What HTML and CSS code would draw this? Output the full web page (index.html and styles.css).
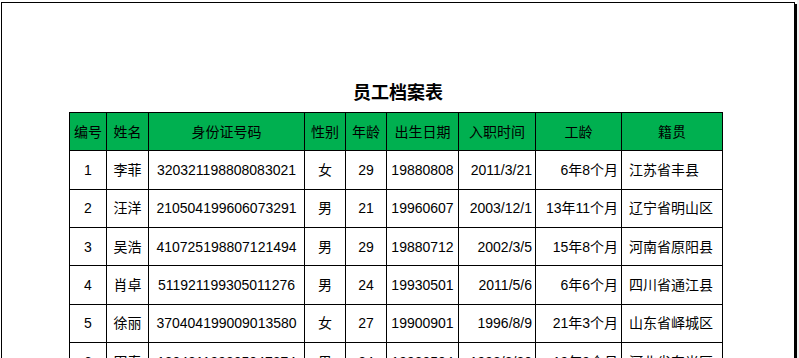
FILE: index.html
```html
<!DOCTYPE html>
<html lang="zh-CN">
<head>
<meta charset="utf-8">
<title>员工档案表</title>
<link rel="stylesheet" href="styles.css">
</head>
<body>
<div class="frame">
  <div class="sheet">
    <h1 class="title">员工档案表</h1>
    <table class="grid">
      <colgroup>
        <col class="c1"><col class="c2"><col class="c3"><col class="c4"><col class="c5">
        <col class="c6"><col class="c7"><col class="c8"><col class="c9">
      </colgroup>
      <thead>
        <tr>
          <th>编号</th><th>姓名</th><th>身份证号码</th><th>性别</th><th>年龄</th>
          <th>出生日期</th><th>入职时间</th><th>工龄</th><th>籍贯</th>
        </tr>
      </thead>
      <tbody>
        <tr><td>1</td><td>李菲</td><td>320321198808083021</td><td>女</td><td>29</td><td>19880808</td><td class="r">2011/3/21</td><td class="r">6年8个月</td><td class="l">江苏省丰县</td></tr>
        <tr><td>2</td><td>汪洋</td><td>210504199606073291</td><td>男</td><td>21</td><td>19960607</td><td class="r">2003/12/1</td><td class="r">13年11个月</td><td class="l">辽宁省明山区</td></tr>
        <tr><td>3</td><td>吴浩</td><td>410725198807121494</td><td>男</td><td>29</td><td>19880712</td><td class="r">2002/3/5</td><td class="r">15年8个月</td><td class="l">河南省原阳县</td></tr>
        <tr><td>4</td><td>肖卓</td><td>511921199305011276</td><td>男</td><td>24</td><td>19930501</td><td class="r">2011/5/6</td><td class="r">6年6个月</td><td class="l">四川省通江县</td></tr>
        <tr><td>5</td><td>徐丽</td><td>370404199009013580</td><td>女</td><td>27</td><td>19900901</td><td class="r">1996/8/9</td><td class="r">21年3个月</td><td class="l">山东省峄城区</td></tr>
        <tr><td>6</td><td>田春</td><td>130421199305047274</td><td>男</td><td>24</td><td>19930504</td><td class="r">1998/2/20</td><td class="r">19年9个月</td><td class="l">河北省东光区</td></tr>
      </tbody>
    </table>
  </div>
  <div class="gutter"></div>
</div>
</body>
</html>
```
FILE: styles.css
```css
html, body {
  margin: 0;
  padding: 0;
  height: 100%;
  overflow: hidden;
  background: #ffffff;
}

.frame {
  display: flex;
  height: 100%;
}

.sheet {
  flex: 0 0 794px;
  box-sizing: border-box;
  margin: 2px 0 0 1px;
  height: 420px;
  border: 1px solid #000;
  box-shadow: 2px 2px 0 #000;
  background: #fff;
  padding: 78px 0 0 67px;
  font-family: "Liberation Sans", "Noto Sans CJK SC", Arial, sans-serif;
  color: #000;
}

.gutter {
  flex: 1;
  margin-left: 2px;
  background: #f0f0f0;
}

.title {
  margin: 0 0 7px -67px;
  font-size: 18px;
  line-height: 24px;
  font-weight: bold;
  text-align: center;
  font-family: "Liberation Sans", "Noto Sans CJK SC", sans-serif;
}

.grid {
  border-collapse: collapse;
  table-layout: fixed;
  font-size: 14px;
}

.c1 { width: 37px; }
.c2 { width: 42px; }
.c3 { width: 156px; }
.c4 { width: 41px; }
.c5 { width: 41px; }
.c6 { width: 72px; }
.c7 { width: 77px; }
.c8 { width: 86px; }
.c9 { width: 101px; }

.grid th,
.grid td {
  border: 1px solid #000;
  padding: 0 2px;
  height: 38.34px;
  box-sizing: border-box;
  text-align: center;
  vertical-align: middle;
  white-space: nowrap;
  overflow: hidden;
  font-weight: normal;
  line-height: 18px;
}

.grid th {
  background: #00b050;
}

.grid td.r {
  text-align: right;
  padding-right: 3px;
}

.grid td.l {
  text-align: left;
  padding-left: 7px;
}
```
